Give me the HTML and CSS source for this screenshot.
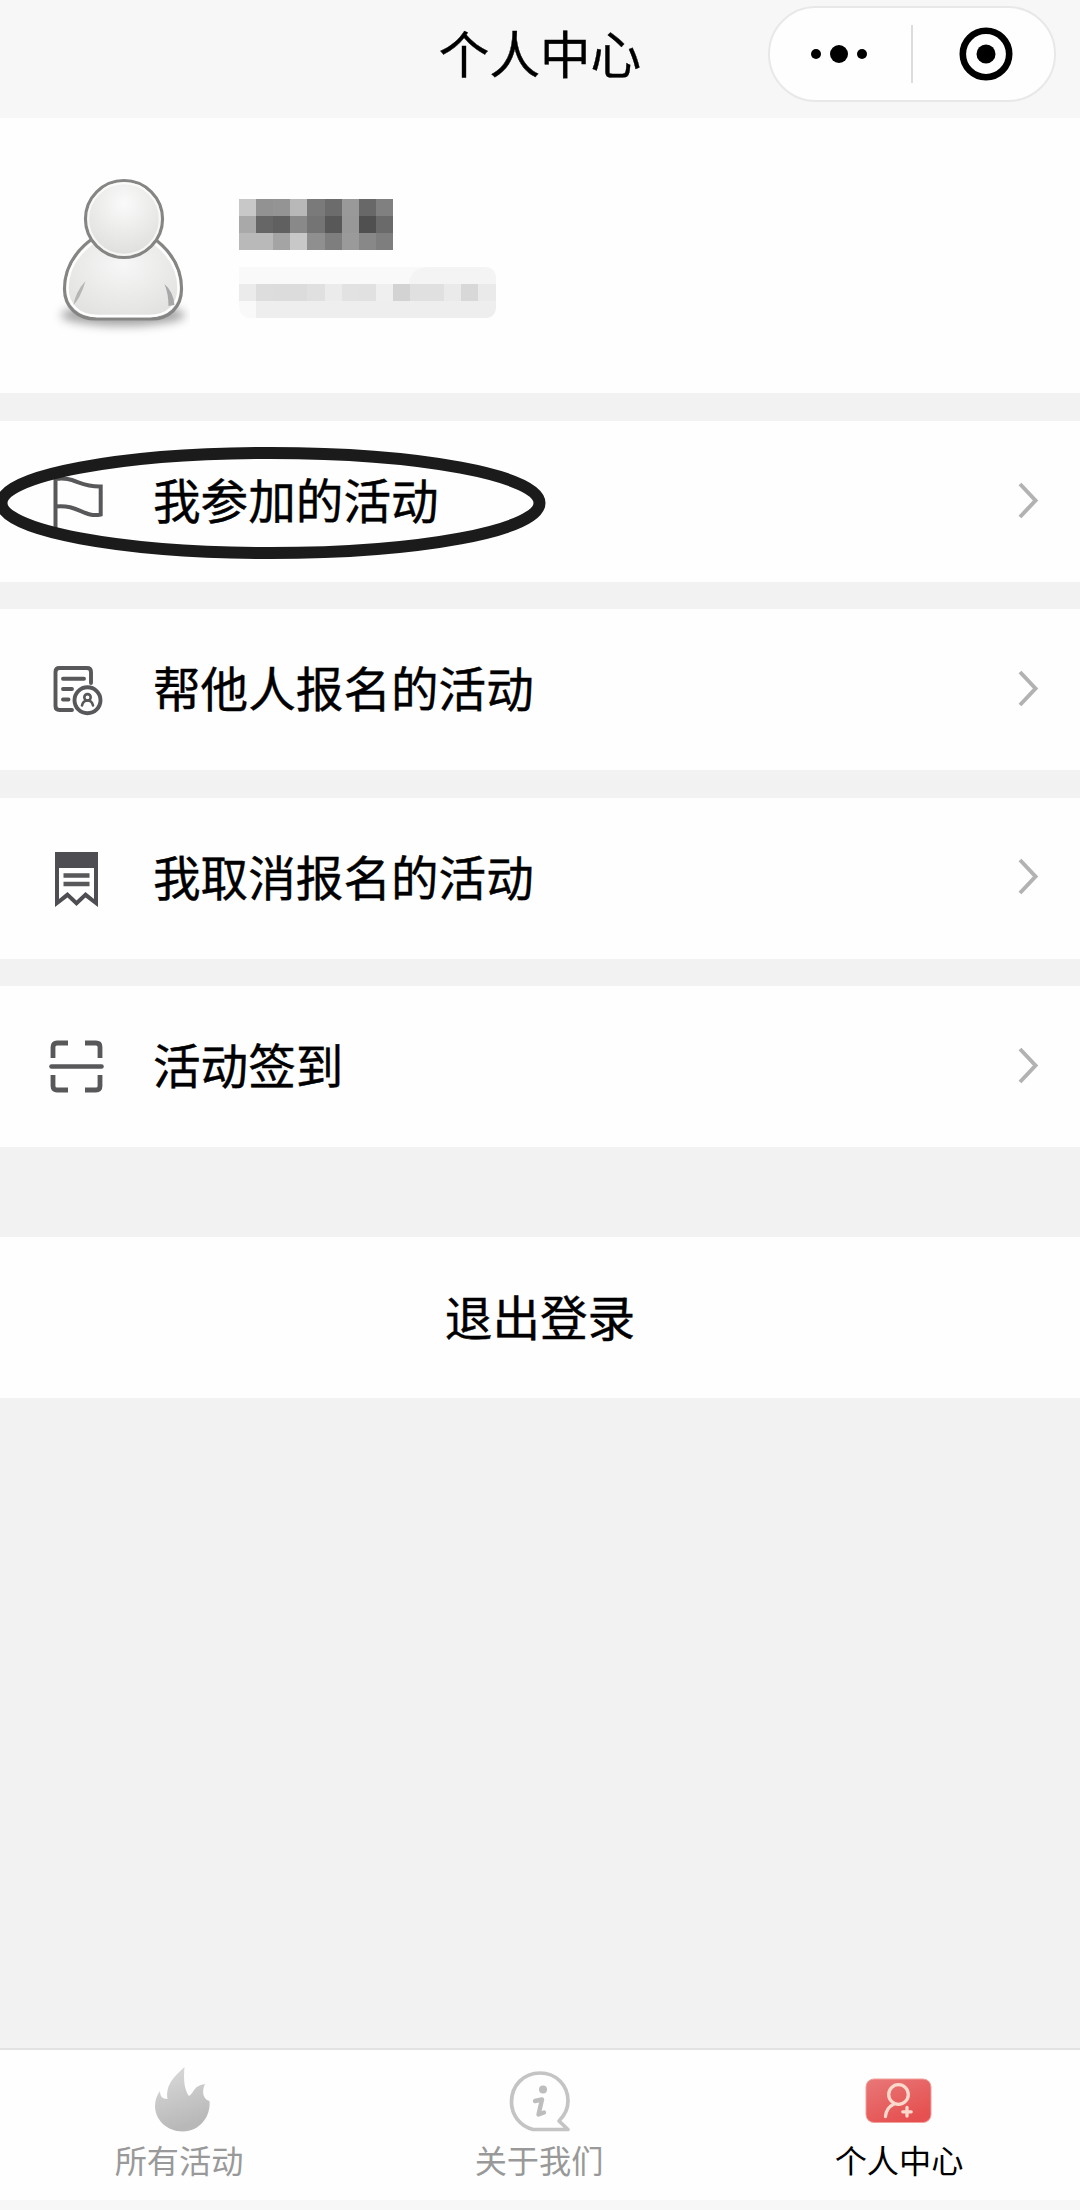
FILE: index.html
```html
<!DOCTYPE html>
<html lang="zh-CN">
<head>
    <meta charset="UTF-8">
    <meta name="viewport" content="width=device-width, initial-scale=1.0">
    <title>个人中心</title>
    <link rel="stylesheet" href="styles.css">
</head>
<body>
    <header class="navbar">
        <h1>个人中心</h1>
        <div class="capsule">
            <svg class="more" width="60" height="30" viewBox="0 0 60 30">
                <circle cx="7" cy="15" r="5"/>
                <circle cx="30" cy="15" r="9"/>
                <circle cx="53" cy="15" r="5"/>
            </svg>
            <span class="divider"></span>
            <svg class="close" width="56" height="56" viewBox="0 0 56 56">
                <circle cx="28" cy="28" r="23.2" fill="none" stroke="#000" stroke-width="6.6"/>
                <circle cx="28" cy="28" r="9.5"/>
            </svg>
        </div>
    </header>

    <section class="profile">
        <svg class="avatar" width="140" height="170" viewBox="0 0 140 170">
            <defs>
                <radialGradient id="head" cx="0.5" cy="0.3" r="0.7">
                    <stop offset="0" stop-color="#fafafa"/>
                    <stop offset="1" stop-color="#dededc"/>
                </radialGradient>
                <radialGradient id="body" cx="0.5" cy="0.4" r="0.7">
                    <stop offset="0" stop-color="#f7f7f7"/>
                    <stop offset="1" stop-color="#dfdfdd"/>
                </radialGradient>
                <filter id="soft" x="-20%" y="-80%" width="140%" height="260%">
                    <feGaussianBlur stdDeviation="5"/>
                </filter>
            </defs>
            <ellipse cx="73" cy="147" rx="62" ry="11" fill="#888" opacity="0.75" filter="url(#soft)"/>
            <g transform="translate(-0.5 2)">
                <path d="M74 58C48 58 15 84 15 119C15 137 28 149 47 149H101C120 149 132 137 132 119C132 84 100 58 74 58Z" fill="url(#body)" stroke="#858583" stroke-width="3.2"/>
                <path d="M74 62C50 62 18 86 18 118C18 135 30 146 48 146H100C118 146 129 135 129 118C129 86 98 62 74 62Z" fill="none" stroke="#fff" stroke-width="2.4"/>
                <path d="M36 111Q26 122 24 135Q31 128 36 111Z" fill="#b5b5b5"/>
                <path d="M115 114Q124 122 125 135L119 136Q119 124 115 114Z" fill="#a8a8a8"/>
            </g>
            <circle cx="74" cy="51" r="38.5" fill="url(#head)" stroke="#858583" stroke-width="3.2"/>
            <circle cx="74" cy="51" r="35.8" fill="none" stroke="#fff" stroke-opacity="0.7" stroke-width="2.2"/>
        </svg>
        <div class="info">
            <svg class="mosaic" width="260" height="120" viewBox="0 0 260 120" shape-rendering="crispEdges">
                <g id="name-cells"></g>
                <path d="M0 68H170L190 68H245Q257 68 257 80V107Q257 119 246 119H12Q0 119 0 105Z" fill="#f9f9f9" shape-rendering="auto"/>
                <path d="M170 85Q172 68 190 68H245Q257 68 257 80V85Z" fill="#f4f4f4" shape-rendering="auto"/>
                <path d="M0 85H257V107Q257 119 246 119H17V102H0Z" fill="#eeeeee" shape-rendering="auto"/>
                <g id="phone-cells"></g>
            </svg>
        </div>
    </section>

    <ul class="menu">
        <li>
            <svg class="icon" width="60" height="60" viewBox="0 0 60 60">
                <path d="M9.500 5V58M9.500 7C28 4 33 15 54.700 14.500V42.500C38 46 32 32 9.500 34.500" stroke-width="4"/>
            </svg>
            <span>我参加的活动</span>
            <svg class="arrow" width="24" height="40" viewBox="0 0 24 40"><path d="M4 3L19.500 19.500L4 36"/></svg>
            <svg class="mark" width="560" height="124" viewBox="0 0 560 124">
                <ellipse cx="280.500" cy="62" rx="269" ry="50"/>
            </svg>
        </li>
        <li>
            <svg class="icon" width="60" height="60" viewBox="0 0 60 60">
                <path d="M26 50H13.500Q9.500 50 9.500 46V12Q9.500 8 13.500 8H41Q45 8 45 12V23M17 18.700H38M17 29H26M17 39.500H22.500"/>
                <circle cx="41.500" cy="40.300" r="13"/>
                <circle cx="41.500" cy="37.300" r="3.200" stroke-width="2.600"/>
                <path d="M36 45.500Q37 40.500 41.500 40.500Q46 40.500 47 45.500" stroke-width="2.600"/>
            </svg>
            <span>帮他人报名的活动</span>
            <svg class="arrow" width="24" height="40" viewBox="0 0 24 40"><path d="M4 3L19.500 19.500L4 36"/></svg>
        </li>
        <li>
            <svg class="icon" width="60" height="60" viewBox="0 0 60 60">
                <path d="M9 4H52V59L39.500 49.500L30.500 58L21.500 49.500L9 59ZM13 20V51L21.500 44L30.500 52.500L39.500 44L48 51V20Z" fill="#4d4d52" fill-rule="evenodd" stroke="none"/>
                <path d="M17.500 27.500H43.500M17.500 36H43.500" stroke-width="4.400" stroke-linecap="butt"/>
            </svg>
            <span>我取消报名的活动</span>
            <svg class="arrow" width="24" height="40" viewBox="0 0 24 40"><path d="M4 3L19.500 19.500L4 36"/></svg>
        </li>
        <li>
            <svg class="icon" width="60" height="60" viewBox="0 0 60 60">
                <path d="M7 21V10Q7 6 11 6H22M39 6H50Q54 6 54 10V21M54 38V49Q54 53 50 53H39M22 53H11Q7 53 7 49V38" stroke-width="4.800" stroke-linecap="butt"/>
                <path d="M5.500 29.500H55.500" stroke-width="4.600"/>
            </svg>
            <span>活动签到</span>
            <svg class="arrow" width="24" height="40" viewBox="0 0 24 40"><path d="M4 3L19.500 19.500L4 36"/></svg>
        </li>
    </ul>

    <button class="logout">退出登录</button>

    <nav class="tabbar">
        <a class="tab">
            <svg width="72" height="72" viewBox="0 0 72 72">
                <defs>
                    <linearGradient id="fire" x1="0" y1="0" x2="0.3" y2="1">
                        <stop offset="0" stop-color="#dcdcdc"/>
                        <stop offset="1" stop-color="#b8b8b8"/>
                    </linearGradient>
                </defs>
                <path d="M40.500 3C39 17 41 27 45 32C51 28 49 22 61 20C58 26 58 35 65.500 37C67 53 55 67.500 39 67.500C22 67.500 11 55 11 42C11 36 13 31 16 27C16 32 18 35 23.500 35C21 20 32 11 40.500 3Z" fill="url(#fire)"/>
            </svg>
            <span>所有活动</span>
        </a>
        <a class="tab">
            <svg width="72" height="72" viewBox="0 0 72 72">
                <path d="M29 65.500C16 62 7.500 51 7.500 38C7.500 21 20 9 36 9C52 9 64 21 64 37C64 46 60 52 55 57L64 65.500Z" fill="none" stroke="#c4c4c4" stroke-width="3.700" stroke-linejoin="round"/>
                <circle cx="39" cy="25.500" r="4" fill="#bdbdbd"/>
                <path d="M31 37L38 35.500L34.500 50.500L40 48.500" fill="none" stroke="#bdbdbd" stroke-width="4.400" stroke-linecap="round" stroke-linejoin="round"/>
            </svg>
            <span>关于我们</span>
        </a>
        <a class="tab active">
            <svg width="72" height="72" viewBox="0 0 72 72">
                <defs>
                    <linearGradient id="card" x1="0" y1="0" x2="0.6" y2="1">
                        <stop offset="0" stop-color="#e87878"/>
                        <stop offset="1" stop-color="#e65050"/>
                    </linearGradient>
                </defs>
                <rect x="2" y="15" width="65" height="43.500" rx="8" fill="url(#card)" stroke="#f2a09a" stroke-width="1"/>
                <g fill="none" stroke="#fbd9cc" stroke-width="3.300" stroke-linecap="round">
                    <circle cx="34.500" cy="30.500" r="9.800"/>
                    <path d="M30 40Q22 44 21.500 52.500M43 43.500V52M38.800 47.800H47.200"/>
                </g>
            </svg>
            <span>个人中心</span>
        </a>
    </nav>

    <script src="script.js"></script>
</body>
</html>
```

FILE: styles.css
```css
* {
    box-sizing: border-box;
}

body {
    margin: 0;
    min-height: 2210px;
    display: flex;
    flex-direction: column;
    font-family: "Noto Sans CJK SC", sans-serif;
    background-color: #f2f2f2;
    color: #000;
}

svg {
    display: block;
    flex: none;
}

.navbar {
    position: relative;
    height: 118px;
    display: flex;
    justify-content: center;
    background-color: #f7f7f7;
}

h1 {
    margin: 0;
    font-size: 50.6px;
    font-weight: 400;
    line-height: 105px;
    -webkit-text-stroke: 0.4px #000;
}

.capsule {
    position: absolute;
    top: 6px;
    right: 24px;
    width: 288px;
    height: 96px;
    display: flex;
    align-items: center;
    justify-content: space-between;
    padding: 0 40px 0 39px;
    border: 2px solid #e8e8e8;
    border-radius: 48px;
    background-color: #fefefe;
}

.divider {
    width: 1.5px;
    height: 58px;
    margin-right: 3px;
    background-color: #dcdcdc;
}

.profile {
    height: 275px;
    display: flex;
    align-items: flex-start;
    padding: 50px 0 0 50px;
    background-color: #fefefe;
}

.info {
    padding: 31px 0 0 49px;
}

.menu {
    list-style: none;
    margin: 28px 0 0;
    padding: 0;
    display: flex;
    flex-direction: column;
    gap: 27.4px;
}

.menu li {
    position: relative;
    height: 161px;
    display: flex;
    align-items: center;
    padding: 0 40px 0 46px;
    background-color: #fefefe;
    font-size: 47.6px;
}

.menu span {
    flex: 1;
    margin-left: 47px;
    padding-bottom: 5px;
    line-height: 70px;
    -webkit-text-stroke: 0.4px #000;
}

.icon {
    fill: none;
    stroke: #58585b;
    stroke-width: 3.9;
    stroke-linecap: round;
}

.arrow {
    fill: none;
    stroke: #b2b2b2;
    stroke-width: 4;
    margin-bottom: 2px;
}

/* hand drawn ring around the first entry */
.mark {
    position: absolute;
    left: -10px;
    top: 20px;
    fill: none;
    stroke: #1b1b1b;
    stroke-width: 12;
}

.logout {
    height: 161px;
    margin-top: 90px;
    padding: 0 0 5px;
    border: none;
    background-color: #fefefe;
    color: #000;
    font-family: inherit;
    font-size: 47.6px;
    -webkit-text-stroke: 0.4px #000;
}

.tabbar {
    margin-top: auto;
    height: 162px;
    display: flex;
    border-top: 2px solid #e2e2e2;
    border-bottom: 10px solid #f7f7f7;
    background-color: #fefefe;
}

.tab {
    flex: 1;
    display: flex;
    flex-direction: column;
    align-items: center;
    padding-top: 14px;
    color: #999;
    font-size: 32.2px;
    line-height: 48px;
}

.tab span {
    margin-top: -1px;
    margin-right: 2px;
}

.active {
    color: #000;
}
```

FILE: script.js
```js
// grey levels of the pixelated name, one row per line
const nameRows = [
    ["#c8c8c8", "#929292", "#949494", "#b8b8b8", "#7a7a7a", "#6c6c6c", "#999999", "#686868", "#808080"],
    ["#a9a9a9", "#666666", "#606060", "#898989", "#747474", "#585858", "#989898", "#505050", "#6a6a6a"],
    ["#b9b9b9", "#b9b9b9", "#a4a4a4", "#c8c8c8", "#8f8f8f", "#7e7e7e", "#9a9a9a", "#888888", "#7e7e7e"]
];
const phoneRow = ["#ebebeb", "#dddddd", "#dcdcdc", "#dcdcdc", "#e0e0e0", "#ebebeb", "#e2e2e2", "#e1e1e1",
    "#efefef", "#d3d3d3", "#e0e0e0", "#e0e0e0", "#eaeaea", "#d8d8d8", "#eaeaea"];
const cell = 17.1;

function drawRow(id, row, top) {
    const group = document.getElementById(id);
    for (let i = 0; i < row.length; i++) {
        const rect = document.createElementNS("http://www.w3.org/2000/svg", "rect");
        rect.setAttribute("x", i * cell);
        rect.setAttribute("y", top);
        rect.setAttribute("width", cell);
        rect.setAttribute("height", 17);
        rect.setAttribute("fill", row[i]);
        group.appendChild(rect);
    }
}

for (let i = 0; i < nameRows.length; i++) {
    drawRow("name-cells", nameRows[i], i * 17);
}
drawRow("phone-cells", phoneRow, 85);
```
